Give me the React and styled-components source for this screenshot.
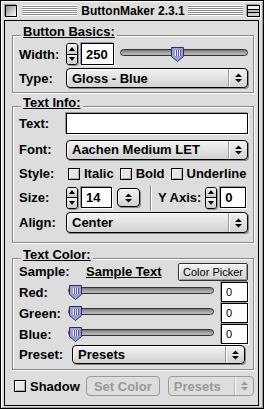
import React from 'react'
import styled, { createGlobalStyle } from 'styled-components'

const GlobalStyle = createGlobalStyle`
  html, body { margin: 0; padding: 0; background: #fff; }
  body { font-family: "Liberation Sans", Arial, sans-serif; color: #000; }
  * { box-sizing: border-box; }
`

const Window = styled.div`
  width: 264px;
  height: 409px;
  border: 1px solid #000;
  background: #dddddd;
  display: flex;
  flex-direction: column;
  box-shadow: inset 1px 1px 0 #fff, inset -1px -1px 0 #999;
`

const TitleBar = styled.div`
  height: 19px;
  flex: none;
  display: flex;
  align-items: center;
  padding: 0 3px 0 4px;
`

const CloseBox = styled.div`
  width: 12px;
  height: 12px;
  border: 1px solid #000;
  background: linear-gradient(135deg, #8a8a8a, #fff);
  box-shadow: -1px -1px 0 #999, 1px 1px 0 #fff;
`

const ShadeBox = styled.div`
  width: 13px;
  height: 12px;
  margin-left: 4px;
  border: 1px solid #000;
  background: linear-gradient(to bottom, #eee 0 3px, #000 3px 4px, #bbb 4px 6px, #000 6px 7px, #ccc 7px);
  box-shadow: -1px -1px 0 #999, 1px 1px 0 #fff;
`

const Stripes = styled.div`
  flex: 1;
  height: 11px;
  margin-left: ${p => p.$ml || 0}px;
  background: repeating-linear-gradient(to bottom, #fff 0 1px, #8a8a8a 1px 2px);
`

const Title = styled.span`
  font-size: 12px;
  font-weight: bold;
  padding: 0 3px 0 4px;
  white-space: nowrap;
`

const Frame = styled.div`
  flex: 1;
  display: flex;
  padding: 0 4px 2px 3px;
`

const Content = styled.div`
  flex: 1;
  display: flex;
  flex-direction: column;
  border: 1px solid #000;
  padding: 0 4px 0 7px;
`

const Group = styled.div`
  position: relative;
  margin-top: ${p => p.$mt}px;
  padding: ${p => p.$pt}px 5px ${p => p.$pb}px 6px;
  border: 1px solid #888;
  box-shadow: 1px 1px 0 #fff, inset 1px 1px 0 #fff;
  display: flex;
  flex-direction: column;
  gap: ${p => p.$gap || 0}px;
`

const GroupTitle = styled.span`
  position: absolute;
  top: -12px;
  left: 8px;
  padding: 0 2px;
  background: #dddddd;
  font-size: 13px;
  line-height: 15px;
  font-weight: bold;
  text-decoration: underline;
  white-space: nowrap;
`

const Row = styled.div`
  display: flex;
  align-items: center;
  height: ${p => p.$h}px;
  margin-top: ${p => p.$mt || 0}px;
`

const Label = styled.span`
  width: ${p => (p.$w ? `${p.$w}px` : 'auto')};
  flex: none;
  margin-left: ${p => p.$ml || 0}px;
  font-size: 13px;
  font-weight: bold;
  white-space: nowrap;
  color: ${p => (p.$disabled ? '#999' : '#000')};
`

const Stepper = styled.div`
  width: 12px;
  height: 22px;
  flex: none;
  margin-left: ${p => p.$ml || 0}px;
  border: 1px solid #000;
  border-radius: 3px;
  display: flex;
  flex-direction: column;
  overflow: hidden;
  box-shadow: 1px 1px 0 #999;
`

const StepHalf = styled.div`
  flex: 1;
  display: flex;
  align-items: center;
  justify-content: center;
  background: linear-gradient(#f6f6f6, #c9c9c9);
  & + & { border-top: 1px solid #000; }
`

const Tri = styled.span`
  width: 0;
  height: 0;
  border-left: 3px solid transparent;
  border-right: 3px solid transparent;
  ${p => (p.$down ? 'border-top: 4px solid #000;' : 'border-bottom: 4px solid #000;')}
`

const Field = styled.div`
  width: ${p => (p.$w ? `${p.$w}px` : 'auto')};
  flex: ${p => (p.$w ? 'none' : '1')};
  height: ${p => p.$h || 21}px;
  margin-left: ${p => p.$ml || 0}px;
  border: 1px solid #000;
  background: #fff;
  box-shadow: -1px -1px 0 #999, 1px 1px 0 #fff;
  display: flex;
  align-items: center;
  padding-left: 4px;
  font-size: ${p => (p.$small ? '11px' : '13px')};
  font-weight: ${p => (p.$small ? 'normal' : 'bold')};
`

const Popup = styled.div`
  flex: 1;
  height: ${p => p.$h || 20}px;
  margin-left: ${p => p.$ml || 0}px;
  margin-right: ${p => p.$mr || 0}px;
  border: 1px solid ${p => (p.$disabled ? '#999' : '#000')};
  border-radius: 4px;
  background: ${p => (p.$disabled ? '#dddddd' : 'linear-gradient(#f2f2f2, #d2d2d2)')};
  box-shadow: ${p => (p.$disabled ? 'none' : '1px 1px 0 #888, inset 1px 1px 0 #fff')};
  display: flex;
  align-items: center;
  color: ${p => (p.$disabled ? '#999' : '#000')};
`

const PopupText = styled.span`
  flex: 1;
  padding-left: 5px;
  font-size: 13px;
  font-weight: bold;
  white-space: nowrap;
`

const PopupArrow = styled.span`
  width: 19px;
  align-self: stretch;
  display: flex;
  align-items: center;
  justify-content: center;
  border-left: 1px solid ${p => (p.$disabled ? '#bbb' : '#999')};
  box-shadow: inset 1px 0 0 #fff;
`

const ArrowButton = styled.div`
  width: 23px;
  height: 19px;
  flex: none;
  margin-left: ${p => p.$ml || 0}px;
  border: 1px solid #000;
  border-radius: 4px;
  background: linear-gradient(#f2f2f2, #d2d2d2);
  box-shadow: 1px 1px 0 #888, inset 1px 1px 0 #fff;
  display: flex;
  align-items: center;
  justify-content: center;
`

const Separator = styled.div`
  width: 2px;
  height: 26px;
  flex: none;
  margin: 0 6px 0 10px;
  border-left: 1px solid #888;
  border-right: 1px solid #fff;
`

const CheckItem = styled.label`
  display: flex;
  align-items: center;
  gap: 4px;
  margin-left: ${p => p.$ml || 0}px;
  font-size: 13px;
  font-weight: bold;
  white-space: nowrap;
`

const Box = styled.span`
  width: 12px;
  height: 12px;
  flex: none;
  border: 1px solid #000;
  background: #e6e6e6;
  box-shadow: inset 1px 1px 0 #fff, inset -1px -1px 0 #aaa;
`

const Slider = styled.div`
  position: relative;
  flex: 1;
  height: 15px;
  margin-left: ${p => p.$ml || 0}px;
`

const Track = styled.div`
  margin-top: 2px;
  height: 7px;
  border: 1px solid #333;
  border-radius: 4px;
  background: linear-gradient(#777, #aaa 60%, #bbb);
`

const Thumb = styled.svg`
  position: absolute;
  top: 0;
`

const SampleLink = styled.span`
  margin-left: ${p => p.$ml || 0}px;
  font-size: 13px;
  font-weight: bold;
  text-decoration: underline;
  white-space: nowrap;
`

const PushButton = styled.div`
  width: ${p => p.$w}px;
  height: ${p => p.$h}px;
  flex: none;
  margin-left: ${p => (p.$ml === 'auto' ? 'auto' : `${p.$ml || 0}px`)};
  border: 1px solid ${p => (p.$disabled ? '#999' : '#333')};
  border-radius: ${p => (p.$disabled ? 4 : 2)}px;
  background: ${p => (p.$disabled ? '#dddddd' : 'linear-gradient(#f4f4f4, #cfcfcf)')};
  box-shadow: ${p => (p.$disabled ? 'none' : 'inset 1px 1px 0 #fff, inset -1px -1px 0 #999')};
  display: flex;
  align-items: center;
  justify-content: center;
  font-size: ${p => (p.$small ? '11px' : '13px')};
  font-weight: ${p => (p.$small ? 'normal' : 'bold')};
  color: ${p => (p.$disabled ? '#999' : '#000')};
  white-space: nowrap;
`

const UpDown = ({ color = '#000' }) => (
  <svg width="7" height="10" viewBox="0 0 7 10">
    <path d="M3.5 0.5 L7 4 H0 Z M0 6 H7 L3.5 9.5 Z" fill={color} />
  </svg>
)

const SpinArrows = ({ ml }) => (
  <Stepper $ml={ml}>
    <StepHalf><Tri /></StepHalf>
    <StepHalf><Tri $down /></StepHalf>
  </Stepper>
)

const HSlider = ({ value, max, ml }) => {
  const pct = (value / max) * 100
  return (
    <Slider $ml={ml}>
      <Track />
      <Thumb width="13" height="15" viewBox="0 0 13 15" style={{ left: `calc(${pct}% - ${pct * 0.13}px + 1px)` }}>
        <path d="M0.5 0.5 H12.5 V9.5 L6.5 14.5 L0.5 9.5 Z" fill="#9c9cd2" stroke="#2e2e5c" />
        <path d="M4.5 3 V9 M6.5 3 V9 M8.5 3 V9" stroke="#ececff" />
        <path d="M5.5 3 V9 M7.5 3 V9 M9.5 3 V9" stroke="#5a5a96" />
      </Thumb>
    </Slider>
  )
}

const colorRows = ['Red:', 'Green:', 'Blue:']

const App = () => {
  return (
    <>
      <GlobalStyle />
      <Window>
        <TitleBar>
          <CloseBox />
          <Stripes $ml={5} />
          <Title>ButtonMaker 2.3.1</Title>
          <Stripes />
          <ShadeBox />
        </TitleBar>
        <Frame>
          <Content>
            <Group $mt={14} $pt={7} $pb={4} $gap={3}>
              <GroupTitle>Button Basics:</GroupTitle>
              <Row $h={22}>
                <Label $w={47}>Width:</Label>
                <SpinArrows />
                <Field $w={33} $h={22} $ml={3}>250</Field>
                <HSlider value={250} max={575} ml={6} />
              </Row>
              <Row $h={20}>
                <Label $w={47}>Type:</Label>
                <Popup>
                  <PopupText>Gloss - Blue</PopupText>
                  <PopupArrow><UpDown /></PopupArrow>
                </Popup>
              </Row>
            </Group>

            <Group $mt={13} $pt={6} $pb={9}>
              <GroupTitle>Text Info:</GroupTitle>
              <Row $h={21}>
                <Label $w={47}>Text:</Label>
                <Field $h={21} />
              </Row>
              <Row $h={21} $mt={5}>
                <Label $w={47}>Font:</Label>
                <Popup>
                  <PopupText>Aachen Medium LET</PopupText>
                  <PopupArrow><UpDown /></PopupArrow>
                </Popup>
              </Row>
              <Row $h={21} $mt={3}>
                <Label $w={47}>Style:</Label>
                <CheckItem $ml={2}><Box />Italic</CheckItem>
                <CheckItem $ml={6}><Box />Bold</CheckItem>
                <CheckItem $ml={6}><Box />Underline</CheckItem>
              </Row>
              <Row $h={21} $mt={3}>
                <Label $w={47}>Size:</Label>
                <SpinArrows />
                <Field $w={31} $h={21} $ml={3}>14</Field>
                <ArrowButton $ml={5}><UpDown /></ArrowButton>
                <Separator />
                <Label>Y Axis:</Label>
                <SpinArrows ml={4} />
                <Field $w={26} $h={21} $ml={3}>0</Field>
              </Row>
              <Row $h={21} $mt={4}>
                <Label $w={47}>Align:</Label>
                <Popup $h={21}>
                  <PopupText>Center</PopupText>
                  <PopupArrow><UpDown /></PopupArrow>
                </Popup>
              </Row>
            </Group>

            <Group $mt={15} $pt={3} $pb={5} $gap={1}>
              <GroupTitle>Text Color:</GroupTitle>
              <Row $h={19}>
                <Label $w={67}>Sample:</Label>
                <SampleLink>Sample Text</SampleLink>
                <PushButton $w={70} $h={18} $ml="auto" $small>Color Picker</PushButton>
              </Row>
              {colorRows.map(name => (
                <Row $h={20} key={name}>
                  <Label $w={47}>{name}</Label>
                  <HSlider value={0} max={255} ml={2} />
                  <Field $w={27} $h={20} $ml={7} $small>0</Field>
                </Row>
              ))}
              <Row $h={19}>
                <Label $w={53}>Preset:</Label>
                <Popup $h={19} $mr={3}>
                  <PopupText>Presets</PopupText>
                  <PopupArrow><UpDown /></PopupArrow>
                </Popup>
              </Row>
            </Group>

            <Row $h={20} $mt={6}>
              <CheckItem $ml={2}><Box />Shadow</CheckItem>
              <PushButton $w={74} $h={20} $ml={6} $disabled>Set Color</PushButton>
              <Popup $h={20} $ml={8} $disabled>
                <PopupText>Presets</PopupText>
                <PopupArrow $disabled><UpDown color="#999" /></PopupArrow>
              </Popup>
            </Row>
          </Content>
        </Frame>
      </Window>
    </>
  )
}

export default App
